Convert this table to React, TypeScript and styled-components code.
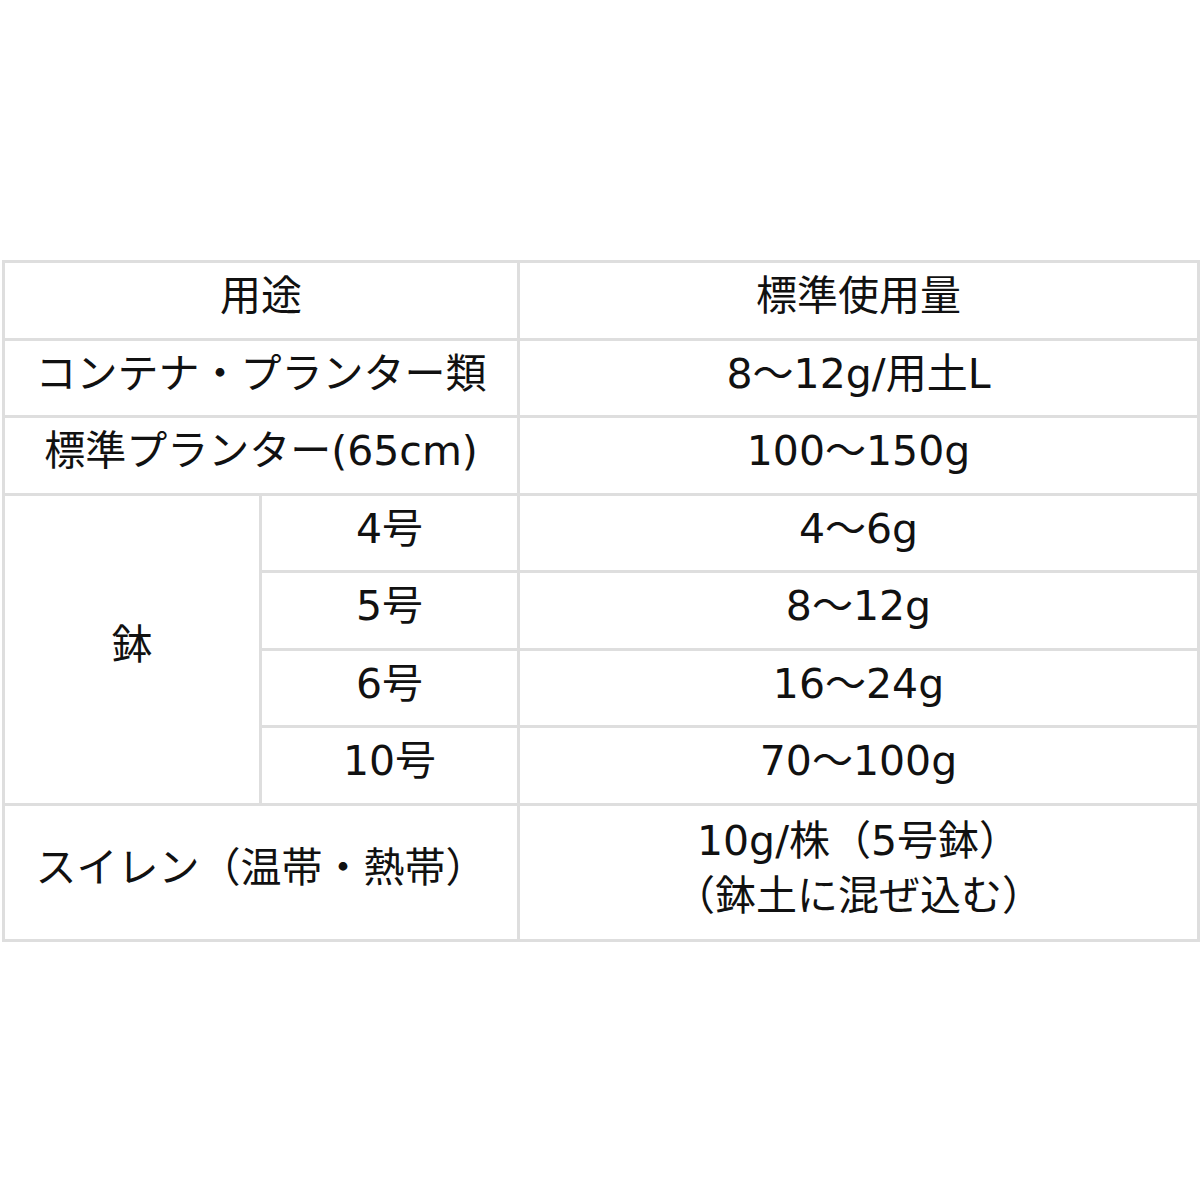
import React from "react";
import styled, { createGlobalStyle } from "styled-components";

const Global = createGlobalStyle`
  html, body { margin: 0; padding: 0; background: #fff; }
  body { font-family: "DejaVu Sans", "Noto Sans CJK JP", sans-serif; color: #111; }
`;

const Page = styled.div`
  width: 1200px;
  height: 1200px;
  padding: 260px 0 0 2px;
  box-sizing: border-box;
`;

const Table = styled.table`
  border-collapse: collapse;
  table-layout: fixed;
  width: 1195px;
  border: 3px solid #dedede;
`;

const Row = styled.tr<{ $tall?: boolean }>`
  height: ${(p) => (p.$tall ? "136px" : "77.5px")};
`;

const Cell = styled.td`
  border: 3px solid #dedede;
  padding: 0 0 7px 0;
  text-align: center;
  vertical-align: middle;
  font-size: 41px;
  line-height: 55px;
  font-weight: 400;
  color: #111;
  white-space: nowrap;
`;

const Line = styled.div``;

export default function App() {
  return (
    <>
      <Global />
      <Page>
        <Table>
          <colgroup>
            <col style={{ width: 257 }} />
            <col style={{ width: 258 }} />
            <col style={{ width: 680 }} />
          </colgroup>
          <tbody>
            <Row>
              <Cell colSpan={2}>用途</Cell>
              <Cell>標準使用量</Cell>
            </Row>
            <Row>
              <Cell colSpan={2}>コンテナ・プランター類</Cell>
              <Cell>8～12g/用土L</Cell>
            </Row>
            <Row>
              <Cell colSpan={2}>標準プランター(65cm)</Cell>
              <Cell>100～150g</Cell>
            </Row>
            <Row>
              <Cell rowSpan={4}>鉢</Cell>
              <Cell>4号</Cell>
              <Cell>4～6g</Cell>
            </Row>
            <Row>
              <Cell>5号</Cell>
              <Cell>8～12g</Cell>
            </Row>
            <Row>
              <Cell>6号</Cell>
              <Cell>16～24g</Cell>
            </Row>
            <Row>
              <Cell>10号</Cell>
              <Cell>70～100g</Cell>
            </Row>
            <Row $tall>
              <Cell colSpan={2}>スイレン（温帯・熱帯）</Cell>
              <Cell>
                <Line>10g/株（5号鉢）</Line>
                <Line>（鉢土に混ぜ込む）</Line>
              </Cell>
            </Row>
          </tbody>
        </Table>
      </Page>
    </>
  );
}
